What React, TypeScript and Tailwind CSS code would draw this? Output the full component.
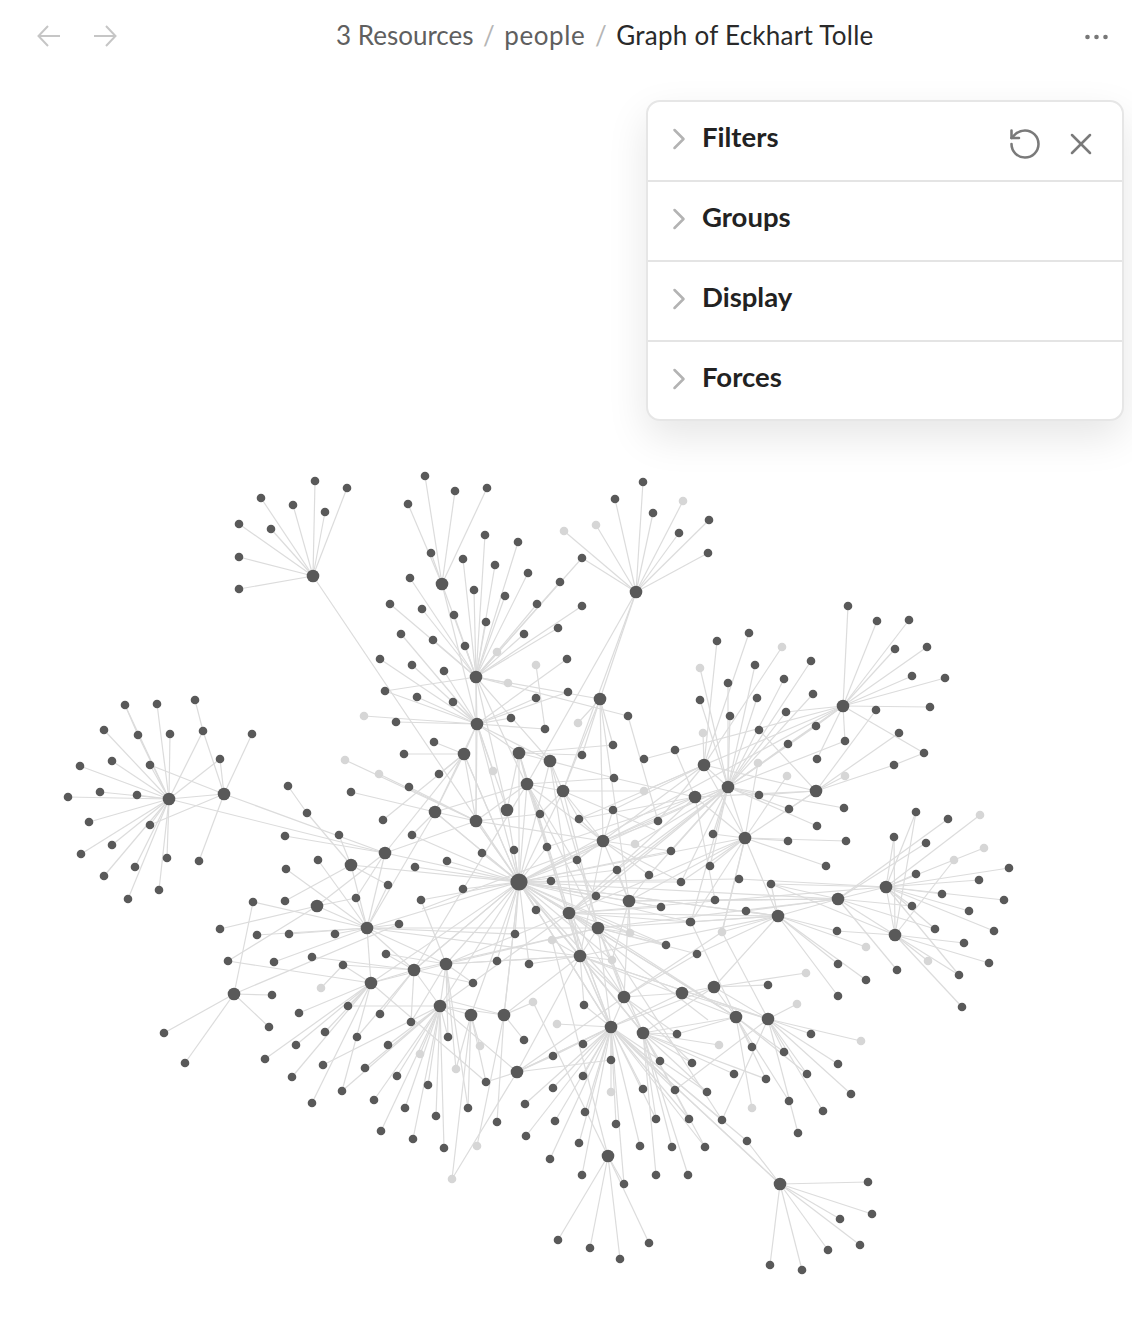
import { ChevronRight, RotateCcw, X as CloseIcon } from "lucide-react";

type Pt = number[];

// hubs
const MAIN: Pt = [519, 882];
const A = [313, 576], B = [442, 584], C = [476, 677], D = [477, 724], E = [600, 699], F = [636, 592];
const G = [843, 706], H = [728, 787], J = [704, 765], K = [695, 797], I = [816, 791], L = [745, 838];
const M = [886, 887], N = [838, 899], O = [895, 935], P = [778, 916], Q = [714, 987], R = [736, 1017];
const S = [768, 1019], T = [682, 993], U = [611, 1027], V = [643, 1033], W = [517, 1072], XX = [471, 1015];
const Y = [504, 1015], Z = [608, 1156], AA = [780, 1184], AB = [234, 994], AC = [371, 983], AD = [414, 970];
const AE = [446, 964], AF = [440, 1006], AG = [169, 799], AH = [224, 794], AI = [385, 853], AJ = [351, 865];
const AK = [317, 906], AL = [367, 928];
const c1 = [464, 754], c2 = [519, 753], c3 = [550, 761], c4 = [527, 784], c5 = [563, 791], c6 = [435, 812];
const c7 = [507, 810], c8 = [476, 821], c9 = [603, 841], c10 = [569, 913], c11 = [629, 901], c12 = [598, 928];
const c13 = [580, 956], c14 = [624, 997];

const hubs = [A, B, C, D, E, F, G, H, J, K, I, L, M, N, O, P, Q, R, S, T, U, V, W, XX, Y, Z, AA, AB, AC, AD, AE, AF, AG, AH, AI, AJ, AK, AL,
  c1, c2, c3, c4, c5, c6, c7, c8, c9, c10, c11, c12, c13, c14];

// light (unresolved) nodes
const faded = new Set(
  ["497,652", "508,683", "536,665", "364,716", "578,723", "683,501", "596,525", "564,531", "782,647", "700,668", "703,733", "758,763",
   "787,776", "845,776", "980,815", "984,848", "954,860", "928,961", "866,947", "722,932", "806,973", "797,1004", "861,1041", "719,1045",
   "752,1108", "557,1024", "480,1046", "456,1069", "611,1092", "477,1146", "452,1179", "321,988", "420,1054", "345,760", "379,774",
   "493,771", "644,791", "635,844", "630,933", "552,940", "612,960", "533,1002"]
);

const fans: [Pt, Pt[]][] = [
  [A, [[315, 481], [347, 488], [261, 498], [293, 505], [325, 512], [239, 524], [271, 529], [239, 557], [239, 589], MAIN]],
  [B, [[425, 476], [455, 491], [487, 488], [408, 504], [431, 553], C, D]],
  [C, [[485, 535], [518, 542], [463, 559], [495, 565], [528, 573], [582, 558], [560, 582], [474, 590], [505, 596], [537, 604], [582, 606],
    [410, 578], [390, 604], [422, 609], [454, 615], [486, 622], [558, 628], [524, 634], [433, 640], [465, 646], [497, 652], [385, 691],
    [508, 683], [628, 716], E, D, c7, c8, [540, 814], c3]],
  [D, [[401, 634], [380, 659], [412, 665], [444, 671], [567, 659], [385, 691], [417, 697], [453, 702], [568, 692], [536, 698], [364, 716],
    [396, 722], [511, 718], [545, 729], c1, c2, c3, c6, c7, c8, MAIN, [493, 771]]],
  [E, [[578, 723], [563, 791], c9, c11, [613, 745], [582, 755]]],
  [F, [[643, 482], [615, 499], [683, 501], [653, 513], [596, 525], [564, 531], [679, 533], [709, 520], [708, 553], [582, 558], c4, c5, E]],
  [G, [[848, 606], [877, 621], [909, 620], [895, 649], [927, 647], [912, 676], [945, 678], [930, 707], [924, 753], [817, 759], [816, 726],
    [788, 744], [786, 712], [644, 759], H, J, [845, 741]]],
  [H, [[757, 698], [755, 665], [784, 679], [811, 661], [786, 712], [813, 694], [816, 726], [788, 744], [845, 741], [730, 716], [728, 683],
    [700, 668], [700, 700], [759, 795], [789, 809], [817, 826], [844, 808], [713, 834], [710, 866], [617, 870], [649, 875],
    [681, 882], [671, 851], [635, 844], c9, c10, [596, 896], MAIN, K, J, [691, 922], L]],
  [J, [[749, 633], [717, 641], [782, 647], [703, 733], [613, 810], [579, 819], [658, 821], [644, 791], [577, 860], L]],
  [K, [[614, 778], [675, 750], [579, 819], [547, 847], MAIN, c10, L, [715, 900]]],
  [I, [[876, 710], [899, 733], [894, 765], [845, 776], [759, 730], K, L, J, [759, 795], [789, 809]]],
  [L, [[788, 841], [846, 841], [826, 866], [713, 834], [787, 776], [758, 763], P, [710, 866], c11, [722, 932], [691, 922], c10, [681, 882]]],
  [[894, 765], [[924, 753]]],
  [M, [[916, 812], [894, 837], [980, 815], [984, 848], [916, 874], [1009, 868], [979, 880], [942, 894], [1004, 900], [969, 911], [994, 931],
    [935, 929], [912, 906], [959, 975], O, N, [771, 884], [739, 879], c10]],
  [O, [[894, 837], [916, 812], [954, 860], [964, 943], [989, 963], [959, 975], [928, 961], [962, 1007], [837, 931], N, [771, 884]]],
  [N, [[948, 819], [926, 843], [912, 906], [935, 929], [897, 970], P, c11, [771, 884], [715, 900], [746, 911], c12]],
  [P, [[866, 947], [838, 964], [866, 980], [838, 996], [837, 931], [746, 911], [771, 884], [691, 922], [722, 932], c12, c13, Q, MAIN, [697, 954]]],
  [Q, [[806, 973], [768, 985], T, R, S, V, U]],
  [R, [[677, 1034], V, [752, 1047], [784, 1052], [807, 1074], [789, 1101], [752, 1108], [766, 1079], MAIN, [691, 922]]],
  [S, [[811, 1034], [861, 1041], [838, 1064], [851, 1094], [784, 1052], [807, 1074], [823, 1111], [798, 1133], [722, 1120], [675, 1090], [797, 1004], [722, 932], T, c13]],
  [V, [[677, 1034], [719, 1045], [692, 1063], [734, 1074], [766, 1079], [660, 1061], [707, 1092], [689, 1119], [656, 1119], [672, 1147],
    [705, 1147], [656, 1175], [688, 1175], c14, MAIN]],
  [U, [[640, 1146], [643, 1089], [675, 1090], [656, 1119], [689, 1119], [705, 1147], [707, 1092], [722, 1120], [747, 1141], AA, AA, [553, 1056], [583, 1044],
    [553, 1088], [525, 1104], [583, 1076], [555, 1121], [526, 1136], [550, 1159], [585, 1112], [579, 1143], [582, 1175], [611, 1060], [611, 1092], [616, 1124],
    [624, 1184], [584, 1005], [557, 1024], c14, c13, MAIN, T, W, c12]],
  [W, [[486, 1082], [553, 1056], [452, 1179], [611, 1060], c14, c13, U]],
  [Y, [[497, 1122], [477, 1146], [534, 1002], c13, [446, 1000], AF, MAIN, [524, 1040]]],
  [XX, [[480, 1046], [452, 1179], [456, 1069], [468, 1108], MAIN, [486, 1082]]],
  [Z, [[558, 1240], [590, 1248], [620, 1259], [649, 1243], [624, 1184], [552, 940], [533, 1002]]],
  [AA, [[868, 1182], [840, 1219], [872, 1214], [860, 1245], [828, 1250], [770, 1265], [802, 1270], [747, 1141]]],
  [AB, [[253, 902], [272, 995], [269, 1027], [164, 1033], [185, 1063], [399, 924]]],
  [AK, [[220, 929], [228, 961], [356, 898], AL, AI]],
  [AJ, [[285, 901], [307, 813], [339, 835], AL, MAIN, [388, 885]]],
  [[288, 786], [[307, 813]]],
  [AI, [[285, 836], AG, AH, MAIN, c8, [356, 898], AL]],
  [c6, [[351, 792], [412, 835], MAIN, c1, c8, c4]],
  [c1, [[383, 820], [434, 742], [404, 754], [439, 774], AI, MAIN, c8]],
  [c8, [[379, 774], [409, 787], [345, 760], MAIN, [540, 814], c9, c4]],
  [AL, [[253, 902], [257, 935], [289, 934], [335, 934], [318, 860], [286, 869], [274, 962], [356, 898], [399, 924], [388, 885], AC, AE, AD, MAIN, c6, c13, [515, 934], c12]],
  [AC, [[343, 965], [348, 1006], [299, 1013], [325, 1032], [296, 1045], [265, 1059], [292, 1077], [312, 1103], [342, 1091], [486, 1082], [228, 961], AD, MAIN]],
  [[343, 965], [[321, 988]]],
  [AD, [[312, 957], [343, 965], [380, 1014], [357, 1037], [411, 1022], [386, 954], [473, 983], MAIN, AF, c4, c12]],
  [AF, [[348, 1006], [388, 1045], [420, 1054], [365, 1068], [397, 1076], [428, 1085], [374, 1100], [405, 1108], [436, 1116], [381, 1131],
    [413, 1139], [444, 1148], [448, 1037], [342, 1091], [323, 1065], AE, XX, MAIN, c10, W]],
  [AE, [[473, 983], [468, 1108], [456, 1069], [448, 1037], [497, 961], [411, 1022], MAIN, c13, c10, [421, 900], AC, c12, [386, 954]]],
  [AG, [[125, 705], [157, 704], [104, 730], [170, 734], [203, 731], [80, 766], [112, 761], [150, 765], [220, 759], [68, 797], [100, 792],
    [137, 795], [89, 822], [112, 845], [81, 854], [167, 858], [135, 867], [104, 876], [159, 890], [128, 899], [138, 735], AH, [150, 825]]],
  [AH, [[203, 731], [252, 734], [199, 861], [150, 825], [150, 765], [220, 759]]],
  [[203, 731], [[195, 700]]],
  [[138, 735], [[125, 705]]],
  [MAIN, [[482, 853], [514, 850], [547, 847], [577, 860], [551, 881], [596, 896], [536, 910], [515, 934], [447, 861], [463, 889], [421, 900], [415, 867],
    [412, 835], [529, 964], [497, 961], [612, 960], [630, 933], [666, 945], [690, 922], [661, 907], [681, 882], [671, 851], [617, 870],
    c1, c2, c3, c4, c5, c6, c7, c8, c9, c10, c11, c12, c13, c14, Y, V, U, U, R, G, P, N, [739, 879], L, AD]],
  [c2, [[613, 745], [582, 755], c3, c4, c10, c7, c13]],
  [c3, [[614, 778], c5, c13, c12]],
  [c4, [[614, 778], c5, c9, c13, c12, [596, 896]]],
  [c5, [[540, 814], [579, 819], [644, 791], c9, c12, [655, 830]]],
  [c9, [[613, 810], [579, 819], [577, 860], [658, 821], [671, 851], [649, 875], [681, 882], c11, c13, [422, 909]]],
  [c10, [[596, 896], [661, 907], [690, 922], c12, c13, U, U, P, c14, [666, 945], [708, 1020]]],
  [c11, [[617, 870], [661, 907], [649, 875], [630, 933], [612, 960], N, c14]],
  [c12, [[630, 933], [666, 945], [697, 954], [552, 940], c13, c14, V, R, [722, 1120]]],
  [c13, [[612, 960], [529, 964], [497, 961], [552, 940], [584, 1005], c14, U, V, R, S]],
  [c14, [[697, 954], [612, 960], [692, 1063], T, [677, 1034], [722, 932]]],
  [[536, 665], [[545, 729]]],
  [[628, 716], [[658, 821]]],
  [[722, 932], [[745, 838]]],
];

const hidden = new Set(["534,1002", "446,1000", "708,1020", "655,830", "422,909"]);

const edges = fans.flatMap(([hub, leaves]) => leaves.map((leaf) => ({ a: hub, b: leaf })));

const hubKeys = new Set(hubs.map((h) => h.join(",")));
const leafKeys = new Set<string>();
fans.forEach(([hub, leaves]) => {
  [hub, ...leaves].forEach((p) => {
    const k = p.join(",");
    if (!hubKeys.has(k) && k !== MAIN.join(",") && !hidden.has(k)) leafKeys.add(k);
  });
});

function Graph() {
  return (
    <svg viewBox="0 0 1132 1324" className="absolute inset-0 w-full h-full">
      <g stroke="#dcdcdc" strokeWidth="1.2">
        {edges.map((e, i) => (
          <line key={i} x1={e.a[0]} y1={e.a[1]} x2={e.b[0]} y2={e.b[1]} />
        ))}
      </g>
      {[...leafKeys].map((k) => {
        const [x, y] = k.split(",").map(Number);
        return <circle key={k} cx={x} cy={y} r="4.3" fill={faded.has(k) ? "#d6d6d6" : "#595959"} />;
      })}
      {hubs.map((h) => (
        <circle key={h.join(",")} cx={h[0]} cy={h[1]} r="6.3" fill="#595959" />
      ))}
      <circle cx={MAIN[0]} cy={MAIN[1]} r="8.6" fill="#595959" />
    </svg>
  );
}

function Section({ label, children, last }: { label: string; children?: React.ReactNode; last?: boolean }) {
  return (
    <div className={`relative flex items-start h-[80px] pl-[13px] pt-[19px] ${last ? "" : "border-b-2 border-[#e4e4e4]"}`}>
      <ChevronRight size={36} strokeWidth={1.7} className="text-[#b3b3b3] shrink-0" />
      <span className="ml-[5px] text-[27.5px] leading-[32px] font-bold text-[#222222]">{label}</span>
      {children}
    </div>
  );
}

export default function App() {
  return (
    <div className="relative w-[1132px] h-[1324px] overflow-hidden bg-white font-['Lato',sans-serif]">
      <Graph />

      <header className="relative flex items-center justify-between h-[72px] pl-[36px] pr-[22px]">
        <div className="flex items-center gap-[30px] text-[#c6c6c6]">
          <svg width="26" height="26" viewBox="0 0 26 26" fill="none" stroke="currentColor" strokeWidth="2">
            <path d="M24 13H3M12 3 2.5 13l9.5 10" />
          </svg>
          <svg width="26" height="26" viewBox="0 0 26 26" fill="none" stroke="currentColor" strokeWidth="2">
            <path d="M2 13h21M14 3l9.5 10L14 23" />
          </svg>
        </div>
        <div className="absolute left-[336px] top-[17px] flex items-center text-[26px] leading-[36px] text-[#5f5f5f] whitespace-nowrap">
          <span>3 Resources</span>
          <span className="mx-[9.5px] text-[#b5b5b5]">/</span>
          <span className="tracking-[0.6px]">people</span>
          <span className="mx-[9.5px] text-[#b5b5b5]">/</span>
          <span className="tracking-[0.27px] text-[#2a2a2a]">Graph of Eckhart Tolle</span>
        </div>
        <svg width="26" height="8" viewBox="0 0 26 8" fill="#777777" className="mt-[2px]">
          <circle cx="3.5" cy="4" r="2.3" />
          <circle cx="12.5" cy="4" r="2.3" />
          <circle cx="21.5" cy="4" r="2.3" />
        </svg>
      </header>

      <div className="absolute left-[646px] top-[100px] w-[478px] h-[321px] rounded-[14px] border-2 border-[#e6e6e6] bg-white shadow-[0_16px_40px_rgba(0,0,0,0.10)]">
        <Section label="Filters">
          <div className="absolute right-[23px] top-[24px] flex items-center gap-[20px] text-[#7a7a7a]">
            <RotateCcw size={36} strokeWidth={1.7} />
            <CloseIcon size={36} strokeWidth={1.7} />
          </div>
        </Section>
        <Section label="Groups" />
        <Section label="Display" />
        <Section label="Forces" last />
      </div>
    </div>
  );
}
